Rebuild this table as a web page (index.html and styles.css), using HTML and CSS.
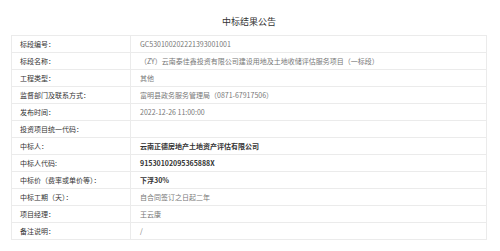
FILE: index.html
```html
<!DOCTYPE html>
<html lang="zh-CN">
<head>
<meta charset="utf-8">
<link rel="stylesheet" href="styles.css">
</head>
<body>
<div class="page">
  <h1 class="title">中标结果公告</h1>
  <table class="info">
    <tr><th>标段编号：</th><td>GC530100202221393001001</td></tr>
    <tr><th>标段名称：</th><td>（ZY）云南泰佳鑫投资有限公司建设用地及土地收储评估服务项目（一标段）</td></tr>
    <tr><th>工程类型：</th><td>其他</td></tr>
    <tr><th>监督部门及联系方式：</th><td>富明县政务服务管理局（0871-67917506）</td></tr>
    <tr><th>发布时间：</th><td>2022-12-26 11:00:00</td></tr>
    <tr><th>投资项目统一代码：</th><td></td></tr>
    <tr><th>中标人：</th><td class="strong">云南正德房地产土地资产评估有限公司</td></tr>
    <tr><th>中标人代码:</th><td class="strong">91530102095365888X</td></tr>
    <tr><th>中标价（费率或单价等）：</th><td class="strong">下浮30%</td></tr>
    <tr><th>中标工期（天）：</th><td>自合同签订之日起二年</td></tr>
    <tr><th>项目经理：</th><td>王云康</td></tr>
    <tr><th>备注说明：</th><td>/</td></tr>
  </table>
</div>
</body>
</html>
```
FILE: styles.css
```css
html, body {
  margin: 0;
  padding: 0;
  background: #fff;
}
.page {
  width: 476px;
  margin-left: 11px;
  font-family: "Noto Sans CJK SC", "Noto Sans", sans-serif;
}
.title {
  margin: 0;
  height: 35px;
  padding-top: 16px;
  box-sizing: border-box;
  text-align: center;
  font-size: 9px;
  line-height: 12px;
  font-weight: normal;
  color: #333;
}
.info {
  width: 476px;
  border-collapse: collapse;
  table-layout: fixed;
}
.info tr {
  height: 17px;
}
.info th, .info td {
  border: 1px solid #ebebeb;
  height: 16px;
  padding: 0;
  font-size: 7px;
  line-height: 14px;
  text-align: left;
  white-space: nowrap;
  overflow: hidden;
}
.info th {
  width: 110px;
  padding-left: 8px;
  font-weight: normal;
  color: #333;
}
.info td {
  padding-left: 9px;
  color: #777;
}
.info td.strong {
  color: #333;
  font-weight: bold;
}
```
